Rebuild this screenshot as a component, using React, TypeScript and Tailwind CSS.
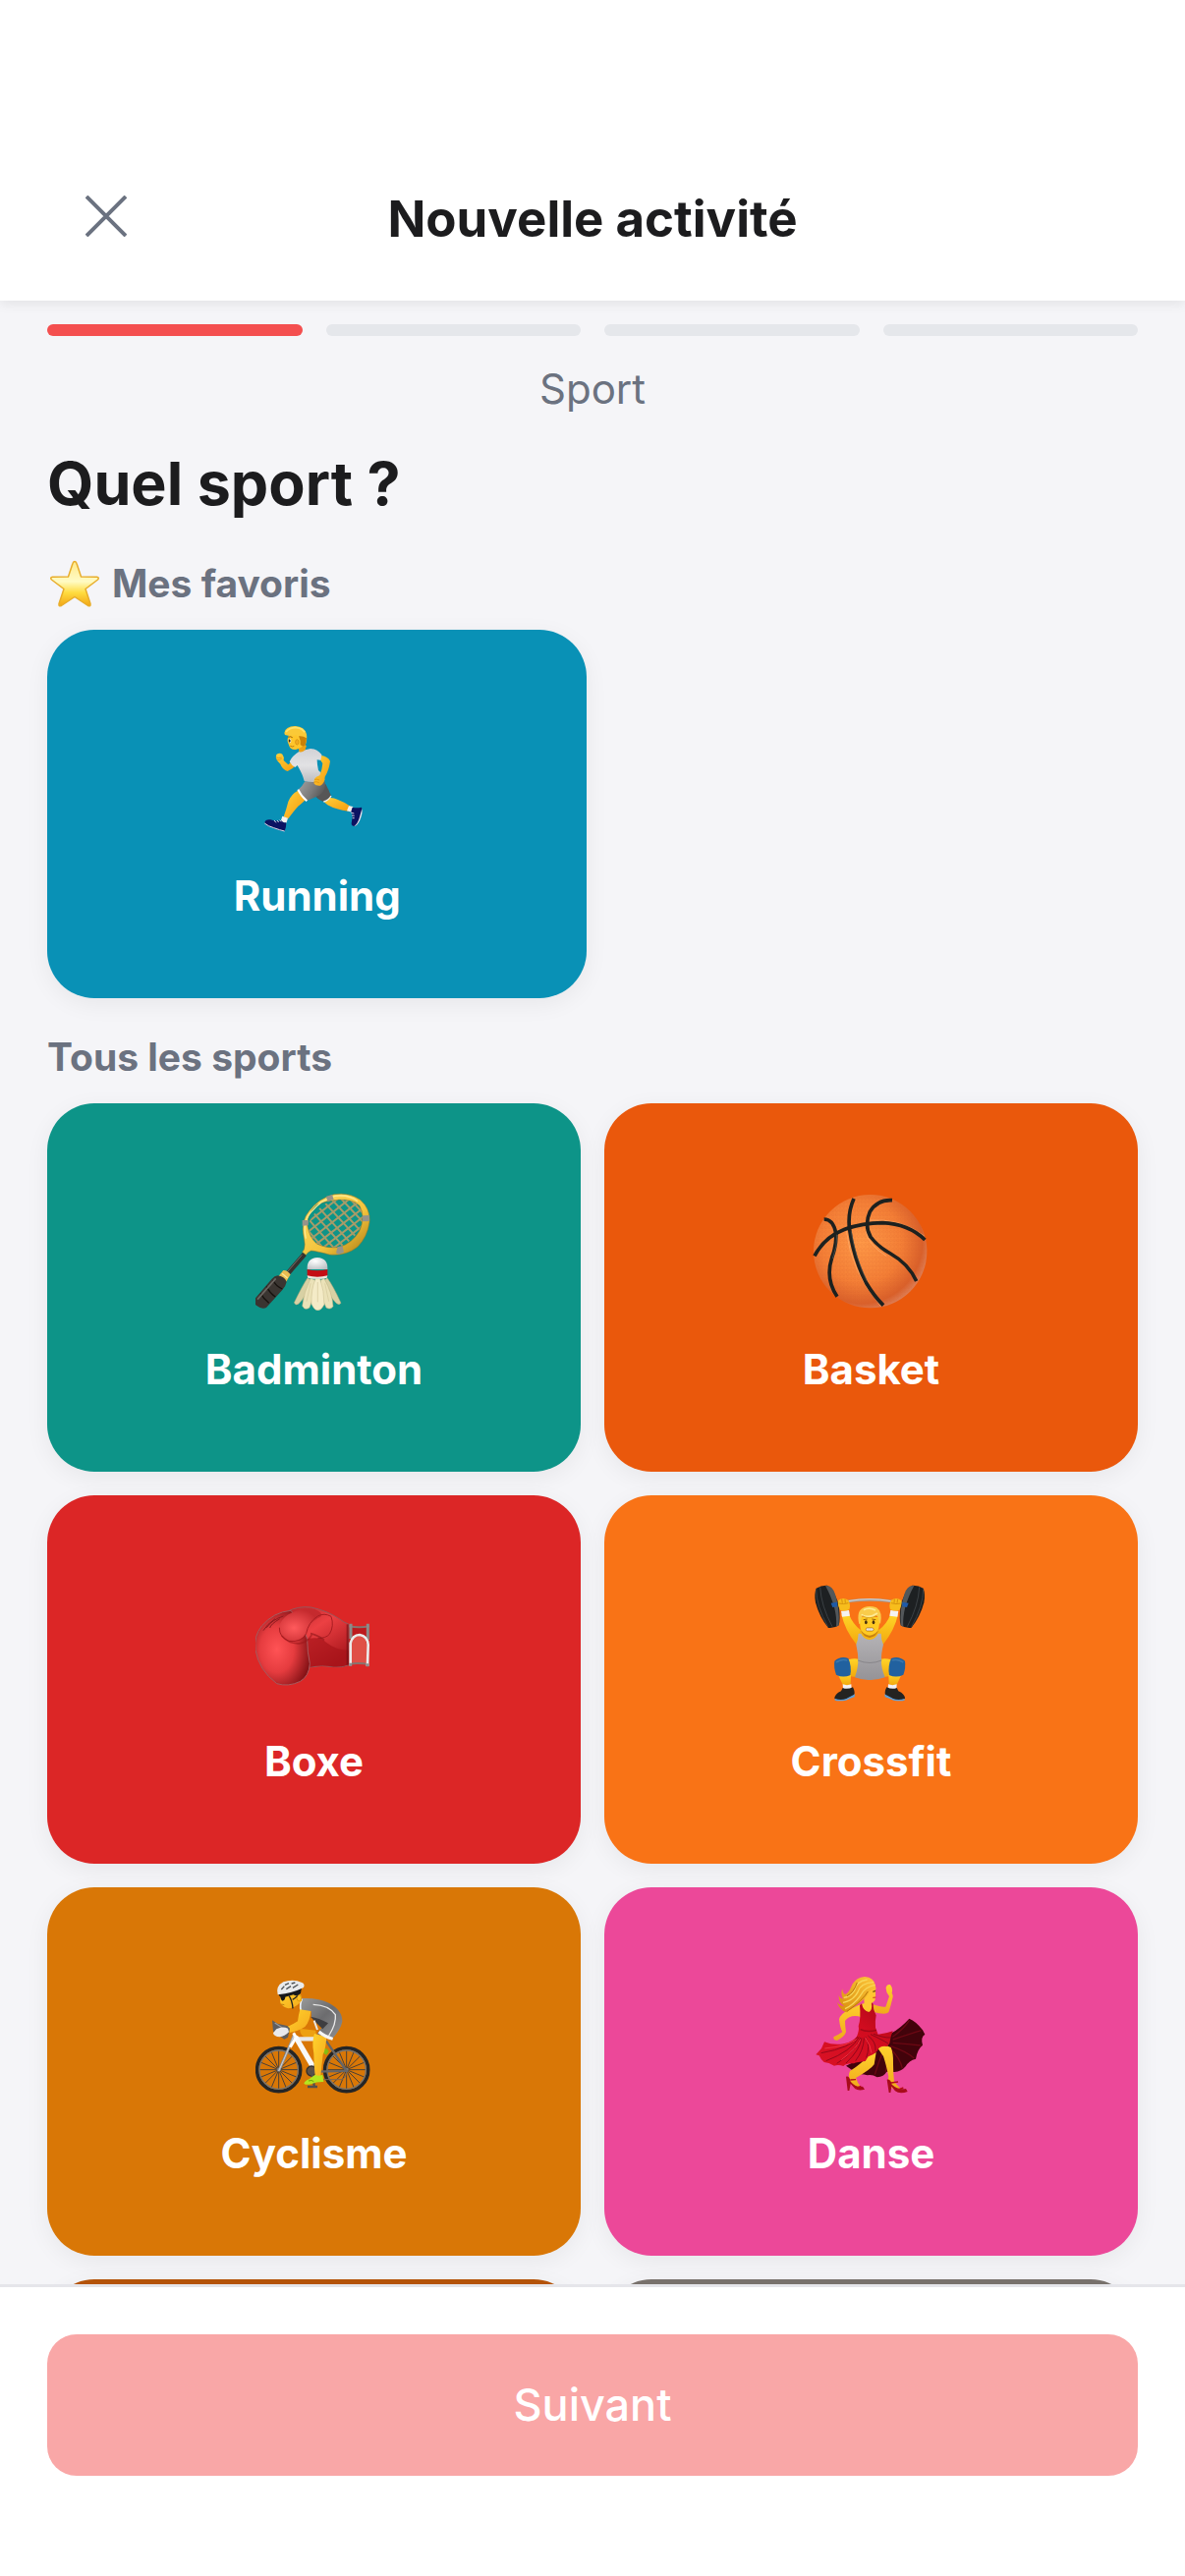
import type { ReactNode } from "react";

interface Sport {
    name: string,
    color: string,
    icon: ReactNode
}

const steps = ["Sport", "Date", "Lieu", "Détails"];

function StarIcon() {
    return (
        <svg viewBox="0 0 52 52" className="h-13 w-13" aria-hidden="true">
            <defs>
                <linearGradient id="starFill" x1="0" y1="0" x2="0" y2="1">
                    <stop offset="0" stopColor="#ffe98a" />
                    <stop offset="0.45" stopColor="#fffbc4" />
                    <stop offset="0.7" stopColor="#ffdc3f" />
                    <stop offset="1" stopColor="#f2a516" />
                </linearGradient>
            </defs>
            <path d="M26 3.500 Q27.500 3.500 28.200 6 L32.500 19 L48.500 19.200 Q51.500 19.800 49.500 22 L37 31.500 L42 46.500 Q42.500 49.800 39.500 48.500 L26 39.500 L12.500 48.500 Q9.500 49.800 10 46.500 L15 31.500 L2.500 22 Q0.500 19.800 3.500 19.200 L19.500 19 L23.800 6 Q24.500 3.500 26 3.500 Z" fill="url(#starFill)" stroke="#e8ad2a" strokeWidth="1.500" strokeLinejoin="round" />
        </svg>
    );
}

function RunningIcon() {
    return (
        <svg viewBox="69 66 360 360" className="h-30 w-30" aria-hidden="true">
            <defs>
                <linearGradient id="runSkin" x1="0" y1="0" x2="1" y2="1">
                    <stop offset="0" stopColor="#ffd23c" />
                    <stop offset="1" stopColor="#f59a0c" />
                </linearGradient>
                <linearGradient id="runShirt" x1="0" y1="0" x2="0" y2="1">
                    <stop offset="0" stopColor="#d2d2d6" />
                    <stop offset="0.5" stopColor="#e2e2e4" />
                    <stop offset="1" stopColor="#bdbdc1" />
                </linearGradient>
                <linearGradient id="runShort" x1="0" y1="0" x2="1" y2="0.400">
                    <stop offset="0" stopColor="#a2a2a2" />
                    <stop offset="0.6" stopColor="#7b7b7b" />
                    <stop offset="1" stopColor="#585858" />
                </linearGradient>
            </defs>
            {/* back leg */}
            <path d="M262 312 Q290 300 310 311 Q334 320 350 332 L344 347 Q306 343 280 328 Z" fill="url(#runSkin)" />
            <path d="M345 331 L358 333 L354 350 L339 346 Z" fill="#f4f1ee" />
            <path d="M356 335 Q368 339 384 335 Q388 350 379 371 Q373 391 361 393 Q350 391 354 378 Q358 360 352 348 Z" fill="#0c1362" />
            <path d="M385 340 Q388 354 379 374 Q372 391 361 393 Q372 385 377 368 Z" fill="#e8e8ee" />
            <path d="M352 352 l9 2 M354 360 l8 1 M356 368 l6 0" stroke="#d8d8e8" strokeWidth="3" />
            <path d="M248 268 L274 264 Q284 282 291 300 Q284 314 268 318 Q250 312 240 298 Z" fill="#565656" />
            <path d="M291 300 Q284 314 268 318" stroke="#eee" strokeWidth="4" fill="none" />
            {/* front leg */}
            <path d="M192 283 Q168 296 160 318 Q154 342 146 364 L160 370 Q177 346 190 332 Q206 320 212 312 Z" fill="url(#runSkin)" />
            <path d="M142 362 L159 368 L154 384 L137 378 Z" fill="#f7f2ef" />
            <path d="M138 375 Q146 385 154 381 Q154 396 149 408 Q128 405 108 396 Q90 391 88 382 Q90 371 106 373 Q124 379 138 375 Z" fill="#0c1362" />
            <path d="M88 384 Q98 393 116 398 Q135 405 149 408" stroke="#dfe0ec" strokeWidth="3" fill="none" />
            <path d="M117 375 l6 7 M126 375 l5 6 M134 374 l4 5" stroke="#ddddea" strokeWidth="3" />
            <path d="M211 256 Q242 260 272 256 Q278 282 256 298 Q236 308 216 316 Q198 302 190 282 Q204 270 211 256 Z" fill="url(#runShort)" />
            <path d="M190 281 Q199 301 217 316" stroke="#fff" strokeWidth="6" fill="none" />
            {/* far arm */}
            <path d="M186 186 Q168 196 160 205 L146 192 Q149 182 142 173 Q134 167 124 174 Q120 184 126 192 L136 203 Q142 220 158 225 Q174 218 184 206 Z" fill="url(#runSkin)" />
            <path d="M122 182 q8 5 18 1 M125 190 q8 3 15 -3" stroke="#d98a09" strokeWidth="2" fill="none" />
            {/* torso */}
            <path d="M192 166 Q172 178 164 196 Q170 207 181 213 L188 207 Q204 234 209 255 Q240 262 271 252 Q268 236 252 222 Q248 204 248 190 L262 192 Q264 184 262 174 Q248 156 228 156 Q206 160 192 166 Z" fill="url(#runShirt)" />
            {/* head */}
            <path d="M190 146 L216 146 L212 160 Q200 170 193 165 Z" fill="#eda015" />
            <path d="M164 112 Q156 126 158 134 L163 148 Q168 161 183 159 Q206 154 213 136 L210 108 Z" fill="#ffc52a" />
            <path d="M148 108 Q151 88 181 87 Q210 88 216 112 Q219 130 211 149 Q201 150 197 144 Q195 126 185 115 Q166 119 150 114 Z" fill="#fbc937" />
            <path d="M192 118 Q199 132 197 144 Q204 151 211 148 Q215 138 216 124 Q204 116 192 118 Z" fill="#c98109" />
            <path d="M153 105 Q164 91 185 92 Q204 95 210 106" stroke="#ffe36c" strokeWidth="5" fill="none" />
            <ellipse cx="187" cy="136" rx="5" ry="8" fill="#f4ae22" stroke="#cc860b" strokeWidth="2" />
            <ellipse cx="165" cy="132" rx="4" ry="7" fill="#fff" />
            <ellipse cx="164" cy="132" rx="3" ry="5" fill="#49300e" />
            <path d="M160 121 q7 -4 13 1" stroke="#9b6209" strokeWidth="3" fill="none" />
            <path d="M166 148 q8 4 12 0" stroke="#9b5809" strokeWidth="2" fill="none" />
            {/* near arm */}
            <path d="M262 177 Q281 180 288 194 Q285 220 272 242 Q272 262 258 269 Q244 270 239 263 Q237 248 246 242 L256 238 Q264 218 265 201 L259 192 Z" fill="url(#runSkin)" />
            <path d="M240 250 q10 -2 15 2 M239 258 q10 -2 15 2" stroke="#d98a09" strokeWidth="2" fill="none" />
        </svg>
    );
}

function BadmintonIcon() {
    return (
        <svg viewBox="60 42 360 360" className="h-30 w-30" aria-hidden="true">
            <defs>
                <linearGradient id="badFrame" x1="0" y1="0" x2="1" y2="1">
                    <stop offset="0" stopColor="#ffdf68" />
                    <stop offset="0.6" stopColor="#f3c33c" />
                    <stop offset="1" stopColor="#a87812" />
                </linearGradient>
                <radialGradient id="badCork" cx="0.4" cy="0.3" r="0.8">
                    <stop offset="0" stopColor="#fff" />
                    <stop offset="1" stopColor="#b9bec2" />
                </radialGradient>
                <clipPath id="badNet">
                    <ellipse cx="303" cy="138" rx="95" ry="68" transform="rotate(-38 303 138)" />
                </clipPath>
            </defs>
            <g clipPath="url(#badNet)" stroke="#a79b68" strokeWidth="6" fill="none">
                <path d="M180 110 L300 250 M200 98 L325 240 M218 82 L345 225 M238 70 L365 212 M258 58 L385 196 M280 48 L400 180 M304 42 L415 160 M332 42 L420 140 M160 125 L280 250" />
                <path d="M180 130 L320 20 M190 155 L350 30 M200 178 L380 35 M210 198 L400 50 M225 215 L420 65 M240 230 L420 92 M260 240 L420 118 M285 245 L420 145" />
            </g>
            <path d="M210 229 L160 287" stroke="#37312e" strokeWidth="15" />
            <path d="M202 232 L158 283" stroke="#746e68" strokeWidth="3" />
            {/* frame */}
            <path d="M208 216 Q213 202 208 180 Q197 130 224 98 Q254 58 300 47 Q347 40 380 64 Q412 92 408 132 Q402 176 372 207 Q337 236 286 231 Q246 220 230 219 Q221 222 214 232 L203 223 Z M246 79 Q214 110 219 145 Q224 178 247 198 Q278 214 318 208 Q356 195 377 160 Q397 115 378 82 Q359 61 315 63 Q275 66 246 79 Z" fill="url(#badFrame)" fillRule="evenodd" stroke="#9b7725" strokeWidth="1.500" />
            <path d="M214 182 Q203 131 230 101 Q260 63 304 52 Q345 47 372 68" stroke="#ffe88e" strokeWidth="4" fill="none" />
            <path d="M275 54 L294 48 L299 62 L281 69 Z M203 126 L222 126 L221 142 L203 143 Z M387 112 L408 111 L407 129 L387 130 Z M311 207 L326 205 L330 224 L314 230 L306 226 Z" fill="#96938a" />
            {/* grip */}
            <path d="M145 279 Q157 278 167 292 L153 315 L131 296 Z" fill="#e9bd51" />
            <path d="M141 289 L158 303" stroke="#fce797" strokeWidth="4" />
            <path d="M128 295 Q148 297 155 314 Q152 329 142 339 L93 393 Q79 399 64 387 Q53 378 57 367 L110 305 Q118 296 128 295 Z" fill="#3a3531" />
            <path d="M113 309 Q122 327 142 336 M94 329 Q104 349 121 360 M76 350 Q85 366 101 379" stroke="#17130f" strokeWidth="4" fill="none" />
            <path d="M122 304 L66 368" stroke="#6b6560" strokeWidth="5" />
            {/* shuttlecock */}
            <path d="M219 302 Q203 326 178 378 Q183 388 192 381 Q215 360 229 309 Z M279 302 Q296 324 321 379 Q316 387 306 379 Q283 357 271 309 Z" fill="#d8d1a4" stroke="#b5a978" strokeWidth="1.500" />
            <path d="M228 304 Q207 346 203 388 Q211 403 225 393 Q238 363 242 309 Z M270 304 Q295 350 297 389 Q289 401 276 393 Q260 365 259 309 Z" fill="#ebe2b8" stroke="#c0b383" strokeWidth="1.500" />
            <path d="M243 305 Q229 340 231 382 Q240 402 250 401 Q262 401 270 383 Q270 341 257 305 Z" fill="#f4ebc7" stroke="#c8bc8e" strokeWidth="1.500" />
            <path d="M250 315 L250 376 M228 319 L216 374 M272 319 L284 374" stroke="#d4c89b" strokeWidth="2" />
            <path d="M218 276 Q216 242 249 240 Q282 242 280 276 Z" fill="url(#badCork)" />
            <path d="M218 276 Q249 284 280 276 L280 296 Q249 304 218 296 Z" fill="#c40d14" />
            <path d="M218 295 Q249 303 280 295 L278 302 Q249 309 220 302 Z" fill="#eee7dc" />
        </svg>
    );
}

function BasketIcon() {
    return (
        <svg viewBox="52 42 360 360" className="h-30 w-30" aria-hidden="true">
            <defs>
                <radialGradient id="ballFill" cx="0.420" cy="0.420" r="0.6">
                    <stop offset="0" stopColor="#ff9a48" />
                    <stop offset="0.6" stopColor="#f47f36" />
                    <stop offset="0.9" stopColor="#d9602a" />
                    <stop offset="1" stopColor="#dd7a50" />
                </radialGradient>
                <pattern id="ballGrain" width="11" height="13" patternUnits="userSpaceOnUse">
                    <path d="M1 3 l4 -2 l4 3 l-2 5 l-4 1 z" fill="none" stroke="#d2591f" strokeWidth="1" opacity="0.500" />
                </pattern>
            </defs>
            <circle cx="228" cy="221" r="173" fill="url(#ballFill)" />
            <circle cx="228" cy="221" r="170" fill="url(#ballGrain)" />
            <g fill="none" stroke="#ffb06e" strokeWidth="3" opacity="0.700">
                <path d="M222 126 Q320 119 393 174" />
                <path d="M155 158 Q168 280 260 388" />
                <path d="M215 160 Q220 200 278 236" />
            </g>
            <g fill="none" stroke="#1d211f" strokeWidth="11" strokeLinecap="butt">
                <path d="M58 235 Q88 178 150 154 Q205 134 265 134 Q345 137 395 186" />
                <path d="M178 60 Q158 105 165 155 Q178 245 216 318 Q240 358 268 386" />
                <path d="M295 65 Q250 62 227 100 Q209 142 229 177 Q252 207 290 228 Q345 259 369 312" />
                <path d="M87 123 Q115 123 123 165 Q126 200 111 240 Q90 305 127 359" />
            </g>
            <g fill="none" stroke="#656b68" strokeWidth="2" opacity="0.800">
                <path d="M170 160 Q182 240 218 312" />
                <path d="M126 170 Q128 205 113 243" />
            </g>
        </svg>
    );
}

function BoxeIcon() {
    return (
        <svg viewBox="60 39 360 360" className="h-30 w-30" aria-hidden="true">
            <defs>
                <radialGradient id="gloveBody" cx="0.400" cy="0.520" r="0.620">
                    <stop offset="0" stopColor="#ff5355" />
                    <stop offset="0.5" stopColor="#e63c3f" />
                    <stop offset="1" stopColor="#861216" />
                </radialGradient>
                <linearGradient id="gloveTop" x1="0" y1="0" x2="0.700" y2="1">
                    <stop offset="0" stopColor="#b92429" />
                    <stop offset="0.45" stopColor="#ec4043" />
                    <stop offset="1" stopColor="#a9161c" />
                </linearGradient>
                <radialGradient id="gloveThumb" cx="0.350" cy="0.600" r="0.600">
                    <stop offset="0" stopColor="#ff5a5c" />
                    <stop offset="1" stopColor="#c52a2e" />
                </radialGradient>
            </defs>
            <path d="M155 122 Q190 103 230 108 Q280 119 314 142 Q330 154 345 160 L346 284 Q325 293 298 290 Q262 283 226 291 L180 230 Z" fill="url(#gloveTop)" stroke="#9a5458" strokeWidth="3" />
            <path d="M217 205 Q256 195 276 215 Q305 238 345 240 L345 282 Q325 292 298 290 Q262 283 226 291 Z" fill="#a8141a" opacity="0.700" />
            <path d="M168 118 Q116 122 79 165 Q54 196 60 238 Q70 300 125 341 Q160 352 197 334 Q224 318 226 280 Q218 244 218 205 Q205 160 168 118 Z" fill="url(#gloveBody)" stroke="#a65a5e" strokeWidth="3" />
            <path d="M190 118 Q142 131 132 168 Q134 200 165 210 Q198 213 213 190 Q222 160 250 141 Q278 130 240 113 Q212 108 190 118 Z" fill="url(#gloveThumb)" />
            <path d="M133 170 Q132 199 162 211 Q202 216 215 188 Q221 154 250 135 Q270 124 291 136 Q301 165 286 190 Q276 202 250 203" fill="none" stroke="#a91d22" strokeWidth="3" />
            <path d="M140 195 Q164 222 198 218 Q220 213 232 192" fill="none" stroke="#9c171b" strokeWidth="5" opacity="0.600" />
            <path d="M94 170 Q110 146 145 135 M84 179 Q94 161 120 143 M104 171 Q106 160 134 143" fill="none" stroke="#8d1b20" strokeWidth="3" />
            <path d="M228 188 Q248 192 270 208" fill="none" stroke="#8e1519" strokeWidth="5" opacity="0.600" />
            {/* cuff */}
            <path d="M341 160 L341 284" stroke="#6e0f13" strokeWidth="6" opacity="0.600" />
            <path d="M346 164 Q376 170 408 163 L406 284 Q376 278 346 283 Z" fill="#bd1a1e" />
            <path d="M354 280 L354 218 Q359 197 377 196 Q397 198 400 222 L399 281 Q376 276 354 280 Z" fill="#e05047" />
            <path d="M346 166 Q376 172 408 166 M346 281 Q376 276 406 282" stroke="#88746f" strokeWidth="6" fill="none" />
            <path d="M351 158 L351 204 M403 158 L403 207" stroke="#8c8b89" strokeWidth="9" />
            <path d="M350 286 L350 218 Q356 193 378 192 Q402 196 404 222 L402 288" fill="none" stroke="#ecebea" strokeWidth="8" />
            <path d="M350 278 l0 9 M402 280 l0 9" stroke="#8f8f8f" strokeWidth="9" />
        </svg>
    );
}

function CrossfitIcon() {
    return (
        <svg viewBox="51 69 360 360" className="h-30 w-30" aria-hidden="true">
            <defs>
                <linearGradient id="fitSkin" x1="0" y1="0" x2="0" y2="1">
                    <stop offset="0" stopColor="#ffd428" />
                    <stop offset="1" stopColor="#f2a80c" />
                </linearGradient>
                <linearGradient id="fitTop" x1="0" y1="0" x2="0" y2="1">
                    <stop offset="0" stopColor="#b5b3b6" />
                    <stop offset="1" stopColor="#959397" />
                </linearGradient>
                <g id="fitSide">
                    {/* plates */}
                    <path d="M62 80 Q77 70 96 71 Q125 94 132 140 Q136 176 131 193 Q116 203 99 201 Q72 169 60 124 Q55 98 62 80 Z" fill="#1d2022" />
                    <path d="M90 72 Q111 69 120 98 Q134 140 131 193 L123 198 Q128 142 90 72 Z" fill="#53575a" />
                    <path d="M62 82 Q62 134 98 197 M74 76 Q77 134 111 197" stroke="#3b4044" strokeWidth="3" fill="none" />
                    <path d="M107 125 L126 122 L126 136 L112 138 Z" fill="#1f5ba8" />
                    {/* arm */}
                    <path d="M139 160 L162 160 Q174 190 198 208 L202 252 Q190 259 183 249 Q150 208 139 160 Z" fill="url(#fitSkin)" />
                    <path d="M138 149 L162 147 L165 164 L141 167 Z" fill="#f4f2f2" />
                    <path d="M129 117 Q144 106 160 116 Q168 130 163 145 Q149 152 135 146 Q127 133 129 117 Z" fill="#f7bd1c" />
                    <path d="M131 126 Q145 130 160 125 M140 113 l2 12 M150 113 l1 12" stroke="#c67f07" strokeWidth="2" fill="none" />
                    {/* leg */}
                    <path d="M160 298 Q184 291 203 300 L197 350 Q175 354 158 344 Z" fill="url(#fitSkin)" />
                    <path d="M128 342 Q148 352 168 345 L167 373 Q156 379 143 374 Z" fill="url(#fitSkin)" />
                    <path d="M118 302 Q136 286 160 294 Q171 318 166 345 Q144 355 123 344 Q115 322 118 302 Z" fill="#21619f" />
                    <path d="M123 306 Q140 294 157 300" stroke="#4a83b8" strokeWidth="5" fill="none" opacity="0.600" />
                    <path d="M143 373 Q156 378 169 373 L170 387 L144 388 Z" fill="#f2f1f4" />
                    <path d="M143 384 Q157 390 174 382 Q181 396 178 406 Q162 416 150 420 Q128 423 118 417 Q118 403 138 394 Z" fill="#242321" />
                    <path d="M119 417 Q138 423 154 417 Q172 408 180 403 L179 412 Q166 416 153 422 Q132 426 119 422 Z" fill="#5e9fd8" />
                </g>
            </defs>
            <path d="M118 128 Q225 102 334 128" stroke="#a99e98" strokeWidth="8" fill="none" />
            <path d="M160 119 Q225 107 290 119" stroke="#d9d5d3" strokeWidth="3" fill="none" />
            <use href="#fitSide" />
            <use href="#fitSide" transform="matrix(-1 0 0 1 451 0)" />
            <path d="M197 205 Q225 226 254 205 L266 250 L184 250 Z" fill="#f6b513" />
            <path d="M191 218 L199 218 Q207 236 225 237 Q243 236 251 218 L260 218 Q260 236 267 252 Q260 280 261 300 Q260 322 272 352 Q246 361 225 360 Q204 361 180 352 Q190 322 190 300 Q190 280 184 252 Q190 236 191 218 Z" fill="url(#fitTop)" />
            <path d="M189 300 Q225 315 262 300" stroke="#88868a" strokeWidth="3" fill="none" />
            {/* head */}
            <path d="M195 168 Q193 207 206 219 Q225 232 244 219 Q256 207 256 168 Z" fill="#ffca23" />
            <path d="M198 208 Q225 240 252 208 Q246 228 225 231 Q205 228 198 208 Z" fill="#a65b0b" opacity="0.600" />
            <path d="M193 190 Q183 147 209 138 Q225 131 246 139 Q266 152 258 190 L253 181 Q252 165 246 164 Q222 178 203 165 Q196 174 196 187 Z" fill="#f9cc4b" />
            <path d="M200 160 Q222 174 249 156 M207 146 Q224 137 243 147" stroke="#fff0a8" strokeWidth="5" fill="none" opacity="0.800" />
            <path d="M203 164 Q225 177 247 163" stroke="#cf920e" strokeWidth="2" fill="none" />
            <ellipse cx="214" cy="184" rx="4" ry="6" fill="#49300e" />
            <ellipse cx="237" cy="184" rx="4" ry="6" fill="#49300e" />
            <path d="M206 176 l12 -2 M232 174 l12 2" stroke="#9a620d" strokeWidth="3" />
            <rect x="214" y="201" width="23" height="9" rx="4" fill="#fff" stroke="#96560e" strokeWidth="2" />
            <path d="M215 206 L236 206 M221 202 v8 M226 202 v8 M231 202 v8" stroke="#b8b3b0" strokeWidth="1" />
        </svg>
    );
}

function CyclismeIcon() {
    return (
        <svg viewBox="60 66 360 360" className="h-30 w-30" aria-hidden="true">
            <defs>
                <linearGradient id="cycSkin" x1="0" y1="0" x2="1" y2="1">
                    <stop offset="0" stopColor="#ffd12d" />
                    <stop offset="1" stopColor="#f5a91c" />
                </linearGradient>
                <linearGradient id="cycSuit" x1="0" y1="0" x2="1" y2="1">
                    <stop offset="0" stopColor="#9a9a9a" />
                    <stop offset="0.5" stopColor="#6c6c6e" />
                    <stop offset="1" stopColor="#919194" />
                </linearGradient>
                <g id="cycWheel">
                    <path d="M0 -60 V60 M-60 0 H60 M-42 -42 L42 42 M-42 42 L42 -42 M-23 -56 L23 56 M-56 -23 L56 23 M-56 23 L56 -23 M-23 56 L23 -56" stroke="#4b4037" strokeWidth="3" />
                    <circle r="66" fill="none" stroke="#242526" strokeWidth="11" />
                    <circle r="59" fill="none" stroke="#77736e" strokeWidth="4" />
                    <circle r="6" fill="#777" />
                </g>
            </defs>
            <use href="#cycWheel" x="131" y="350" />
            <use href="#cycWheel" x="338" y="350" />
            {/* far leg */}
            <path d="M208 226 L244 230 Q248 250 236 257 L206 248 Q194 240 196 225 Z" fill="#eda011" />
            <path d="M268 286 Q280 283 284 294 L277 305 L264 298 Z" fill="#87ba10" />
            {/* bike */}
            <path d="M276 262 L338 354 L244 356" stroke="#656567" strokeWidth="7" fill="none" />
            <path d="M258 380 L324 380 Q338 372 338 356" stroke="#78665a" strokeWidth="3" fill="none" />
            <path d="M178 243 Q164 280 131 354" stroke="#929396" strokeWidth="8" fill="none" />
            <path d="M178 243 Q164 280 131 354" stroke="#d0d1d3" strokeWidth="3" fill="none" />
            <path d="M179 256 L275 256" stroke="#e8e8e8" strokeWidth="13" fill="none" />
            <path d="M182 249 L237 343" stroke="#f8f8f8" strokeWidth="16" fill="none" />
            <path d="M176 238 L184 251 L166 281" stroke="#fff" strokeWidth="9" fill="none" />
            <path d="M270 256 L240 341" stroke="#88898c" strokeWidth="7" />
            <circle cx="231" cy="354" r="15" fill="#5c5149" stroke="#33302e" strokeWidth="4" />
            <path d="M231 354 L240 402 M219 402 L249 402" stroke="#54504c" strokeWidth="7" />
            {/* near leg */}
            <path d="M240 240 L276 250 Q276 284 266 304 Q262 338 259 371 L242 370 Q238 333 238 300 Q231 266 240 240 Z" fill="url(#cycSkin)" />
            <path d="M241 366 Q254 371 265 365 L268 387 Q248 386 230 394 Q214 398 208 392 Q211 383 225 378 Z" fill="#b5e61f" />
            <path d="M222 384 q10 -4 16 2" stroke="#6da10a" strokeWidth="3" fill="none" />
            {/* suit */}
            <path d="M202 132 Q254 130 284 146 Q326 168 325 203 Q320 228 293 257 L248 241 Q255 228 272 214 Q252 202 231 190 L230 171 L196 170 Q194 148 202 132 Z" fill="url(#cycSuit)" />
            <path d="M228 188 Q254 192 282 208 L265 226 L242 203 Z" fill="#3e3d40" />
            <path d="M236 151 Q285 153 304 182 Q307 210 284 246" stroke="#eaeaea" strokeWidth="4" fill="none" />
            <path d="M254 234 Q270 248 296 256" stroke="#f5f5f5" strokeWidth="9" fill="none" />
            <path d="M239 200 L249 228" stroke="#e9e7e4" strokeWidth="6" />
            <path d="M202 134 Q194 151 199 171" stroke="#f1f1f1" strokeWidth="5" fill="none" />
            {/* arm */}
            <path d="M196 166 L229 171 Q226 203 211 219 Q190 233 164 237 L156 219 Q178 210 189 202 Q191 184 196 166 Z" fill="url(#cycSkin)" />
            <path d="M111 199 L127 209 L157 216 L165 224 L159 251 L148 257 L114 233 Z" fill="#5e5e60" />
            <path d="M119 207 L142 222" stroke="#999" strokeWidth="4" />
            <path d="M124 226 Q143 216 159 224 L162 235 Q149 248 134 250 Q116 249 114 238 Z" fill="#e9e9ec" />
            {/* head */}
            <path d="M139 118 Q133 138 137 148 Q145 160 160 163 Q184 162 201 139 Q204 123 190 114 Z" fill="url(#cycSkin)" />
            <ellipse cx="193" cy="131" rx="7" ry="9" fill="#ffc324" stroke="#cf870b" strokeWidth="2" />
            <path d="M130 119 L202 92 L198 117 Q186 128 176 121 L150 128 Q140 130 134 126 Z" fill="#17191c" />
            <path d="M136 126 L151 126 Q151 138 143 140 Q137 138 136 126 Z" fill="#151515" />
            <path d="M162 124 Q172 137 174 163 M188 124 Q180 133 173 136" stroke="#202020" strokeWidth="4" fill="none" />
            <path d="M128 121 Q121 95 145 82 Q176 72 202 84 Q212 88 207 99 Q174 116 128 121 Z" fill="#e9ebec" />
            <path d="M139 105 L148 95 M154 104 L168 95 M174 100 L190 90 M150 91 L162 86 M170 87 L181 84" stroke="#4e5356" strokeWidth="4" />
            <path d="M139 150 l9 2" stroke="#9f5d07" strokeWidth="2" />
        </svg>
    );
}

function DanseIcon() {
    return (
        <svg viewBox="52 66 360 360" className="h-30 w-30" aria-hidden="true">
            <defs>
                <linearGradient id="danSkin" x1="0" y1="0" x2="0" y2="1">
                    <stop offset="0" stopColor="#ffd22d" />
                    <stop offset="1" stopColor="#f0a91c" />
                </linearGradient>
                <linearGradient id="danHair" x1="1" y1="0" x2="0" y2="1">
                    <stop offset="0" stopColor="#ffc83b" />
                    <stop offset="1" stopColor="#d78c0c" />
                </linearGradient>
                <linearGradient id="danDress" x1="0" y1="1" x2="1" y2="0">
                    <stop offset="0" stopColor="#d91225" />
                    <stop offset="0.6" stopColor="#d20c1f" />
                    <stop offset="1" stopColor="#a30817" />
                </linearGradient>
            </defs>
            {/* inside of the skirt */}
            <path d="M290 240 Q322 222 347 194 Q368 202 388 229 L395 242 Q381 250 388 275 Q372 287 367 317 Q346 322 336 340 Q323 356 302 357 L278 356 Q270 371 249 373 Q234 364 219 367 Q202 361 188 365 Q171 348 154 338 L230 300 Z" fill="#42030b" />
            <path d="M296 250 Q332 224 347 199 M297 258 Q352 240 384 230 M297 268 Q345 272 383 276 M290 278 Q338 294 362 315 M288 284 Q320 315 326 346 M278 290 Q282 330 275 356 M268 291 Q252 330 242 365" stroke="#6b0813" strokeWidth="4" fill="none" />
            {/* legs */}
            <path d="M219 309 Q203 331 166 354 Q159 369 168 389 Q181 407 201 405 Q188 389 184 375 Q230 349 240 334 L246 297 Z" fill="url(#danSkin)" />
            <path d="M249 281 Q271 270 291 282 Q299 299 298 332 Q298 363 301 386 Q314 402 326 412 Q307 418 294 406 Q278 388 284 371 Q276 332 268 309 Z" fill="url(#danSkin)" />
            {/* shoes */}
            <path d="M154 371 Q164 367 168 386 Q184 405 205 401 L211 410 Q192 416 181 407 L168 393 L164 414 L159 414 Z" fill="#a70c1b" />
            <path d="M167 381 L184 380 M182 407 L200 400" stroke="#b50c1b" strokeWidth="4" />
            <path d="M279 380 Q290 378 294 395 Q312 412 337 408 L342 417 Q318 425 304 415 L293 401 L290 420 L285 420 Z" fill="#a70c1b" />
            <path d="M292 390 L313 387 M309 412 L329 405" stroke="#b50c1b" strokeWidth="4" />
            {/* right arm */}
            <path d="M237 151 Q262 160 275 158 L286 126 Q275 112 276 99 Q279 88 289 90 Q298 101 294 116 Q299 123 296 132 Q290 158 284 175 Q275 184 238 174 Z" fill="url(#danSkin)" />
            {/* left arm and shoulders */}
            <path d="M197 151 Q175 161 160 169 Q137 180 133 196 Q136 224 143 235 Q130 244 116 250 Q115 262 128 260 Q149 250 154 235 Q151 215 151 201 Q165 182 192 187 L219 199 L243 170 L226 143 Z" fill="url(#danSkin)" />
            {/* head and hair */}
            <path d="M209 133 L210 160 Q226 172 232 148 L242 139 Q246 129 243 102 L220 104 Z" fill="#ffc632" />
            <path d="M243 91 Q239 68 211 66 Q185 69 174 88 Q161 120 151 120 Q142 114 143 102 Q136 122 146 134 Q135 134 132 122 Q131 147 149 156 Q135 156 127 144 Q132 166 155 175 Q183 156 200 142 Q220 126 225 111 Q235 103 246 104 Z" fill="url(#danHair)" />
            <path d="M238 83 Q198 85 190 113 Q177 139 145 145 M219 75 Q184 80 180 108 Q165 129 147 130 M243 91 Q212 97 201 119 Q181 150 151 164" stroke="#f9d75a" strokeWidth="4" fill="none" />
            <path d="M221 111 Q204 139 157 172 M188 84 Q177 116 157 125" stroke="#b77609" strokeWidth="3" fill="none" />
            <path d="M236 112 l8 -3" stroke="#735009" strokeWidth="4" />
            <path d="M236 130 l9 -1" stroke="#c53121" strokeWidth="3" />
            {/* dress */}
            <path d="M196 153 L202 148 Q206 171 224 174 Q235 170 232 145 L237 149 Q236 163 246 184 Q242 203 244 221 L252 242 Q277 240 297 232 Q289 249 287 270 L279 279 Q255 276 249 293 Q237 306 222 310 L213 324 Q187 326 178 331 Q156 329 146 339 Q131 334 118 338 Q101 328 87 327 Q77 319 72 307 L62 304 L79 285 L88 265 Q115 276 147 271 Q177 263 187 248 Q195 230 192 217 Q200 194 196 153 Z" fill="url(#danDress)" />
            <path d="M190 249 Q170 283 78 299 M194 250 Q170 294 93 323 M198 252 Q185 294 126 331 M202 253 Q197 289 154 330 M209 253 Q208 290 183 323 M214 250 Q229 278 216 313 M221 246 Q247 265 244 292 M229 242 Q267 260 283 270 M238 241 Q271 253 289 252" stroke="#92071a" strokeWidth="3" fill="none" />
            <path d="M186 257 Q157 278 89 285 M198 257 Q187 285 140 320 M213 252 Q229 276 232 299" stroke="#f03242" strokeWidth="3" fill="none" />
            <path d="M198 227 Q219 237 247 229" stroke="#a10818" strokeWidth="4" fill="none" />
        </svg>
    );
}

const favorites: Sport[] = [
    { name: "Running", color: "bg-[#0991b6]", icon: <RunningIcon /> },
];

const sports: Sport[] = [
    { name: "Badminton", color: "bg-[#0d9488]", icon: <BadmintonIcon /> },
    { name: "Basket", color: "bg-[#ea580c]", icon: <BasketIcon /> },
    { name: "Boxe", color: "bg-[#dc2626]", icon: <BoxeIcon /> },
    { name: "Crossfit", color: "bg-[#f97316]", icon: <CrossfitIcon /> },
    { name: "Cyclisme", color: "bg-[#d97706]", icon: <CyclismeIcon /> },
    { name: "Danse", color: "bg-[#ec4899]", icon: <DanseIcon /> },
];

function SportCard({ sport }: { sport: Sport }) {
    return (
        <button
            type="button"
            className={`flex w-full flex-col items-center rounded-[48px] pt-[91px] pb-[74px] text-[42px] leading-[60px] font-bold text-white shadow-[0_6px_24px_rgba(0,0,0,0.06)] ${sport.color}`}
        >
            {sport.icon}
            <span className="mt-[30px]">{sport.name}</span>
        </button>
    );
}

export default function App() {
    const step = 0;

    return (
        <div className="flex h-screen flex-col bg-[#f5f5f8] font-['Inter','Liberation_Sans',sans-serif] text-[#1c1c1e]">
            <header className="z-10 flex items-center bg-white px-15 pt-[172px] pb-[38px] shadow-[0_3px_12px_rgba(0,0,0,0.08)]">
                <button type="button" aria-label="Fermer" className="flex h-24 w-24 items-center justify-center text-[#6b7280]">
                    <svg viewBox="0 0 42 42" className="h-[42px] w-[42px]" fill="none" stroke="currentColor" strokeWidth="4">
                        <path d="M1 1 L41 41 M41 1 L1 41" />
                    </svg>
                </button>
                <h1 className="flex-1 pt-1.5 text-center text-[51px] leading-[72px] font-bold">Nouvelle activité</h1>
                <div className="w-24" />
            </header>

            <main className="flex min-h-0 flex-1 flex-col overflow-y-auto px-12 pt-6 [scrollbar-width:none]">
                <div className="flex gap-6">
                    {steps.map((s, i) => (
                        <div key={s} className={`h-3 flex-1 rounded-full ${i <= step ? "bg-[#f44f4f]" : "bg-[#e5e7eb]"}`} />
                    ))}
                </div>
                <p className="mt-6 text-center text-[42px] leading-[60px] text-[#6b7280]">{steps[step]}</p>
                <h2 className="mt-6 text-[61px] leading-[84px] font-bold">Quel sport ?</h2>

                <h3 className="mt-9 flex items-center gap-3 pl-0.5 text-[39px] leading-[48px] font-bold text-[#6b7280]">
                    <span className="-my-1"><StarIcon /></span>
                    Mes favoris
                </h3>
                <div className="mt-[23px] w-[49.5%]">
                    {favorites.map((s) => <SportCard key={s.name} sport={s} />)}
                </div>

                <h3 className="mt-9 text-[39px] leading-[48px] font-bold text-[#6b7280]">Tous les sports</h3>
                <div className="mt-[23px] grid grid-cols-2 gap-6">
                    {sports.map((s) => <SportCard key={s.name} sport={s} />)}
                    <div className="h-[375px] rounded-[48px] bg-[#b45309] shadow-[0_6px_24px_rgba(0,0,0,0.06)]" />
                    <div className="h-[375px] rounded-[48px] bg-[#78716c] shadow-[0_6px_24px_rgba(0,0,0,0.06)]" />
                </div>
            </main>

            <footer className="z-10 border-t-3 border-[#e5e5ea] bg-white px-12 pt-12 pb-[102px]">
                <button type="button" disabled className="h-36 w-full rounded-[30px] bg-[#f44f4f] text-[45px] font-medium text-white disabled:opacity-50">
                    Suivant
                </button>
            </footer>
        </div>
    );
}
